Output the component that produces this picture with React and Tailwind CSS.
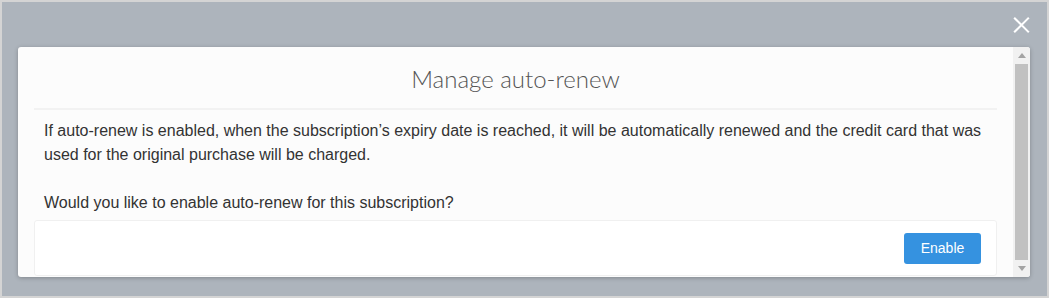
export default function App() {
  return (
    <div className="w-[1049px] h-[298px] border-2 border-[#d4d4d4] bg-[#adb4bc] relative pt-[45px] pl-[16px] pr-[17px] font-['Liberation_Sans',Arial,sans-serif]">
      <button className="absolute top-[14px] right-[17px] w-[17px] h-[18px] flex items-center justify-center">
        <svg width="18" height="18" viewBox="0 0 18 18" fill="none" stroke="white" strokeWidth="2.2" strokeLinecap="square">
          <path d="M2 2 L16 16 M16 2 L2 16" />
        </svg>
      </button>
      <div className="h-[230px] rounded-[3px] shadow-[0_1px_4px_rgba(0,0,0,0.25)] bg-[#fcfcfc] flex overflow-hidden">
        <div className="flex-1 px-[16px]">
          <div className="h-[63px] flex items-center justify-center border-b-2 border-[#f2f2f2]">
            <h1 className="font-['Lato',sans-serif] font-light text-[24px] text-[#555] leading-none pt-[2px]">Manage auto-renew</h1>
          </div>
          <div className="px-[10px] pt-[9px] text-[16px] leading-[24px] text-[#333]">
            <p>If auto-renew is enabled, when the subscription’s expiry date is reached, it will be automatically renewed and the credit card that was used for the original purchase will be charged.</p>
            <p className="mt-[24px]">Would you like to enable auto-renew for this subscription?</p>
          </div>
          <div className="mt-[5px] bg-white border border-[#f0f0f0] rounded-[3px] flex justify-end px-[15px] pt-[12px] pb-[11px]">
            <button className="w-[77px] h-[31px] rounded-[3px] bg-[#3592e0] text-white text-[14px]">Enable</button>
          </div>
        </div>
        <div className="w-[17px] bg-[#f1f1f1] flex flex-col items-center">
          <div className="h-[17px] flex items-center justify-center">
            <svg width="8" height="5" viewBox="0 0 8 5"><path d="M0 5 L4 0 L8 5 Z" fill="#a3a3a3" /></svg>
          </div>
          <div className="w-[13px] flex-1 bg-[#c1c1c1]" />
          <div className="h-[17px] flex items-center justify-center">
            <svg width="8" height="5" viewBox="0 0 8 5"><path d="M0 0 L4 5 L8 0 Z" fill="#a3a3a3" /></svg>
          </div>
        </div>
      </div>
    </div>
  );
}
